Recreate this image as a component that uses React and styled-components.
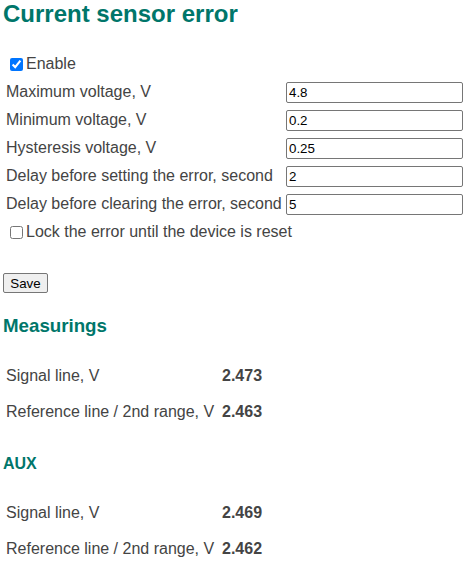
import React from 'react';
import styled, { createGlobalStyle } from 'styled-components';

const GlobalStyle = createGlobalStyle`
    html, body {
        margin: 0;
        padding: 0;
        background: #fff;
    }
    body {
        font-family: 'Liberation Sans', Arial, sans-serif;
        color: #444;
    }
`;

const fields = [
    { label: 'Maximum voltage, V', value: '4.8' },
    { label: 'Minimum voltage, V', value: '0.2' },
    { label: 'Hysteresis voltage, V', value: '0.25' },
    { label: 'Delay before setting the error, second', value: '2' },
    { label: 'Delay before clearing the error, second', value: '5' },
];

const measurings = [
    { label: 'Signal line, V', value: '2.473' },
    { label: 'Reference line / 2nd range, V', value: '2.463' },
];

const aux = [
    { label: 'Signal line, V', value: '2.469' },
    { label: 'Reference line / 2nd range, V', value: '2.462' },
];

const App = () => (
    <Page>
        <GlobalStyle />
        <Title>Current sensor error</Title>
        <Form>
            <CheckRow>
                <input type="checkbox" defaultChecked />
                Enable
            </CheckRow>
            {fields.map((f) => (
                <FieldRow key={f.label}>
                    <Label>{f.label}</Label>
                    <Input type="text" defaultValue={f.value} />
                </FieldRow>
            ))}
            <CheckRow>
                <input type="checkbox" />
                Lock the error until the device is reset
            </CheckRow>
        </Form>
        <SaveButton type="button">Save</SaveButton>

        <SectionTitle>Measurings</SectionTitle>
        <Readings $gap={21}>
            {measurings.map((m) => (
                <Reading key={m.label}>
                    <span>{m.label}</span>
                    <Value>{m.value}</Value>
                </Reading>
            ))}
        </Readings>

        <SubTitle>AUX</SubTitle>
        <Readings $gap={22}>
            {aux.map((m) => (
                <Reading key={m.label}>
                    <span>{m.label}</span>
                    <Value>{m.value}</Value>
                </Reading>
            ))}
        </Readings>
    </Page>
);

export default App;

const Page = styled.main`
    width: 470px;
    box-sizing: border-box;
    padding: 0 3px;
`;

const Title = styled.h2`
    margin: 0;
    font-size: 24px;
    line-height: 28px;
    font-weight: bold;
    color: #00766a;
`;

const Form = styled.div`
    margin-top: 22px;
    padding-left: 3px;
    display: flex;
    flex-direction: column;
`;

const CheckRow = styled.label`
    height: 28px;
    display: flex;
    align-items: center;
    font-size: 16px;

    input {
        width: 13px;
        height: 13px;
        margin: 0 3px 0 4px;
    }
`;

const FieldRow = styled.div`
    height: 28px;
    display: grid;
    grid-template-columns: 280px 177px;
    align-items: center;
`;

const Label = styled.span`
    font-size: 16px;
    white-space: nowrap;
`;

const Input = styled.input`
    box-sizing: border-box;
    width: 177px;
    height: 21px;
    margin-top: 1px;
    padding: 1px 2px;
    border: 1px solid #767676;
    border-radius: 2px;
    font-family: 'Liberation Sans', Arial, sans-serif;
    font-size: 13.33px;
    color: #000;
    background: #fff;
`;

const SaveButton = styled.button`
    display: block;
    box-sizing: border-box;
    margin-top: 27px;
    height: 20px;
    width: 45px;
    padding: 0;
    border: 1px solid #767676;
    border-radius: 2px;
    background: #efefef;
    font-family: 'Liberation Sans', Arial, sans-serif;
    font-size: 13.33px;
    color: #000;
`;

const SectionTitle = styled.h3`
    margin: 22px 0 0;
    font-size: 18.72px;
    line-height: 22px;
    font-weight: bold;
    color: #00766a;
`;

const SubTitle = styled.h4`
    margin: 25px 0 0;
    font-size: 16px;
    line-height: 18px;
    font-weight: bold;
    color: #00766a;
`;

const Readings = styled.div`
    margin-top: ${(p) => p.$gap}px;
    padding-left: 3px;
`;

const Reading = styled.div`
    height: 36px;
    display: grid;
    grid-template-columns: 216px auto;
    align-items: center;
    font-size: 16px;
`;

const Value = styled.span`
    font-weight: bold;
`;
